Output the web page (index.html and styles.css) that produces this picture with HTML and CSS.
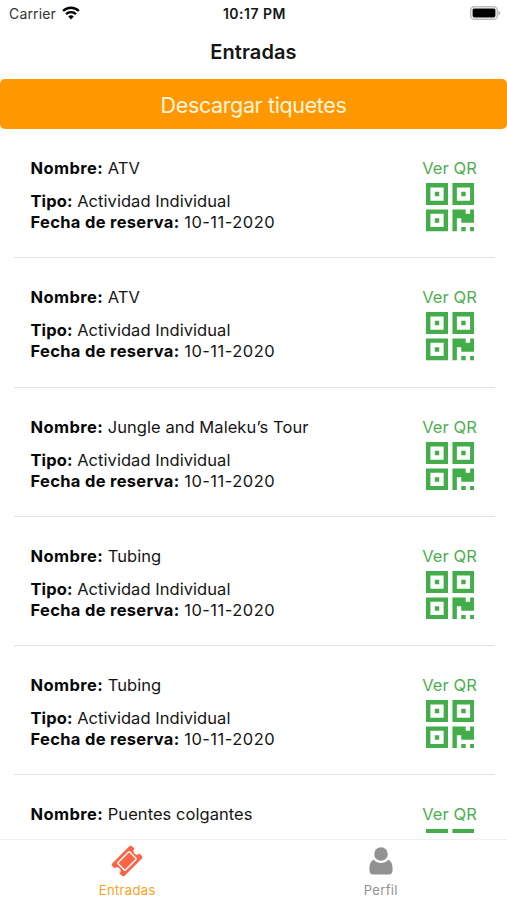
FILE: index.html
```html
<!DOCTYPE html>
<html lang="es">
<head>
<meta charset="utf-8">
<title>Entradas</title>
<link rel="stylesheet" href="styles.css">
</head>
<body>
<svg class="defs" aria-hidden="true">
  <symbol id="qr" viewBox="0 0 11 11">
    <path fill-rule="evenodd" d="M0 0h5v5H0zM1 1v3h3V1zM2 2h1v1H2zM6 0h5v5H6zM7 1v3h3V1zM8 2h1v1H8zM0 6h5v5H0zM1 7v3h3V7zM2 8h1v1H2zM6 6h3v1h1V6h1v3H8V8H7v3H6zM8 10h1v1H8zM10 10h1v1h-1z"/>
  </symbol>
</svg>
<div class="screen">
  <header class="status">
    <div class="carrier"><span>Carrier</span>
      <svg class="wifi" viewBox="0 0 18 14"><path d="M9 13.4 6.2 10.6a4 4 0 0 1 5.6 0z"/><path class="arc" d="M4 8.1a7.1 7.1 0 0 1 10 0M1.1 5a11.2 11.2 0 0 1 15.8 0"/></svg>
    </div>
    <span class="time">10:17 PM</span>
    <svg class="battery" viewBox="0 0 31 14"><rect class="shell" x=".7" y=".7" width="26.6" height="12.6" rx="3.6"/><rect x="2.6" y="2.6" width="22.8" height="8.8" rx="1.6"/><path class="tip" d="M28.5 4.7q3.6 2.3 0 4.6z"/></svg>
  </header>
  <h1 class="title"><span>Entradas</span></h1>
  <button class="download"><span>Descargar tiquetes</span></button>
  <main class="list">
    <article class="item"><div class="info"><p class="name"><b>Nombre:</b> <span>ATV</span></p><p class="type"><b>Tipo:</b> <span>Actividad Individual</span></p><p class="date"><b>Fecha de reserva:</b> <span>10-11-2020</span></p></div><a class="qr"><span>Ver QR</span><svg><use href="#qr"/></svg></a></article>
    <article class="item"><div class="info"><p class="name"><b>Nombre:</b> <span>ATV</span></p><p class="type"><b>Tipo:</b> <span>Actividad Individual</span></p><p class="date"><b>Fecha de reserva:</b> <span>10-11-2020</span></p></div><a class="qr"><span>Ver QR</span><svg><use href="#qr"/></svg></a></article>
    <article class="item"><div class="info"><p class="name"><b>Nombre:</b> <span>Jungle and Maleku’s Tour</span></p><p class="type"><b>Tipo:</b> <span>Actividad Individual</span></p><p class="date"><b>Fecha de reserva:</b> <span>10-11-2020</span></p></div><a class="qr"><span>Ver QR</span><svg><use href="#qr"/></svg></a></article>
    <article class="item"><div class="info"><p class="name"><b>Nombre:</b> <span>Tubing</span></p><p class="type"><b>Tipo:</b> <span>Actividad Individual</span></p><p class="date"><b>Fecha de reserva:</b> <span>10-11-2020</span></p></div><a class="qr"><span>Ver QR</span><svg><use href="#qr"/></svg></a></article>
    <article class="item"><div class="info"><p class="name"><b>Nombre:</b> <span>Tubing</span></p><p class="type"><b>Tipo:</b> <span>Actividad Individual</span></p><p class="date"><b>Fecha de reserva:</b> <span>10-11-2020</span></p></div><a class="qr"><span>Ver QR</span><svg><use href="#qr"/></svg></a></article>
    <article class="item"><div class="info"><p class="name"><b>Nombre:</b> <span>Puentes colgantes</span></p></div><a class="qr"><span>Ver QR</span><svg><use href="#qr"/></svg></a></article>
  </main>
  <nav class="tabs">
    <a class="tab active">
      <svg class="ticket" viewBox="0 0 32 32"><g transform="rotate(-45 16 16)"><path d="M4 7.300h24a2 2 0 0 1 2 2v3.300a3.400 3.400 0 0 0 0 6.800v3.300a2 2 0 0 1-2 2H4a2 2 0 0 1-2-2v-3.300a3.400 3.400 0 0 0 0-6.800V9.300a2 2 0 0 1 2-2z"/><rect class="inner" x="7.800" y="10.800" width="16.400" height="10.400" rx=".8"/></g></svg>
      <span>Entradas</span>
    </a>
    <a class="tab">
      <svg class="person" viewBox="0 0 24 28"><circle cx="12" cy="7" r="6.800"/><path d="M4.800 12.700a9.600 9.600 0 0 0 14.400 0C22.500 14 23.600 17.500 23.600 22.500c0 3.300-1.200 5-3.600 5H4c-2.400 0-3.600-1.700-3.600-5 0-5 1.100-8.500 4.400-9.800z"/></svg>
      <span>Perfil</span>
    </a>
  </nav>
</div>
</body>
</html>
```
FILE: styles.css
```css
* { box-sizing: border-box; }
body { margin: 0; background: #fff; color: #151515; font-family: Inter, sans-serif; }
.defs { position: absolute; width: 0; height: 0; }
.screen { width: 507px; height: 900px; display: flex; flex-direction: column; overflow: hidden; }
.status { height: 28px; flex: none; display: grid; grid-template-columns: 1fr auto 1fr; align-items: center; padding: 0 6px 0 9px; font-size: 14px; }
.carrier { display: flex; align-items: center; gap: 6px; color: #333; letter-spacing: .15px; }
.carrier span { margin-top: -1px; }
.wifi { width: 18px; height: 14px; margin-top: -2px; fill: #000; }
.arc { fill: none; stroke: #000; stroke-width: 2.3; }
.time { font-weight: 600; font-size: 14px; letter-spacing: .5px; margin: -2px 0 0 -1px; }
.battery { width: 31px; height: 14px; justify-self: end; margin-top: -2px; }
.shell { fill: #fff; stroke: #bbb; stroke-width: 1.4; }
.tip { fill: #aaa; }
.title { height: 51px; flex: none; margin: 0; text-align: center; font-size: 20px; line-height: 48px; font-weight: 600; letter-spacing: .1px; }
.download { height: 50px; flex: none; border: 0; border-radius: 5px; background: #ff9800; color: #fff4dc; font: 400 21.500px/50px Inter, sans-serif; letter-spacing: -.37px; padding: 1px 0 0; text-align: center; }
.list { flex: 1; min-height: 0; overflow: hidden; padding: .4px 12px 0 14px; }
.item { height: 129.1px; display: flex; justify-content: space-between; align-items: flex-start; border-bottom: 1px solid #e2e2e2; padding: 29px 18px 0 16.500px; font-size: 16.500px; line-height: 21px; }
.info p { margin: 0; white-space: nowrap; }
.info .name { margin-bottom: 12px; }
.info b { font-weight: 700; color: #080808; }
.name b { letter-spacing: .4px; }
.name span { letter-spacing: .05px; }
.type b { letter-spacing: .1px; }
.type span { letter-spacing: .05px; }
.date b { letter-spacing: .32px; }
.date span { letter-spacing: .47px; }
.qr { display: flex; flex-direction: column; align-items: center; color: #4caf50; }
.qr span { letter-spacing: .1px; }
.qr svg { width: 48.500px; height: 48.500px; margin: 4px 0 0 1px; fill: #43ad49; }
.tabs { height: 61px; flex: none; display: grid; grid-template-columns: 1fr 1fr; border-top: 1px solid #eee; margin-top: 6px; }
.tab { display: flex; flex-direction: column; align-items: center; color: #929292; font-size: 13px; line-height: 18px; letter-spacing: .35px; }
.tab span { margin: 4px 0 0 1px; }
.active { color: #ff9f1c; }
.ticket { width: 32px; height: 32px; margin: 5px 0 0 1px; fill: #ff6347; }
.inner { fill: none; stroke: #fff; stroke-width: 1.5; }
.person { width: 24px; height: 28px; margin: 7px 0 2px 1px; fill: #929292; }
```
